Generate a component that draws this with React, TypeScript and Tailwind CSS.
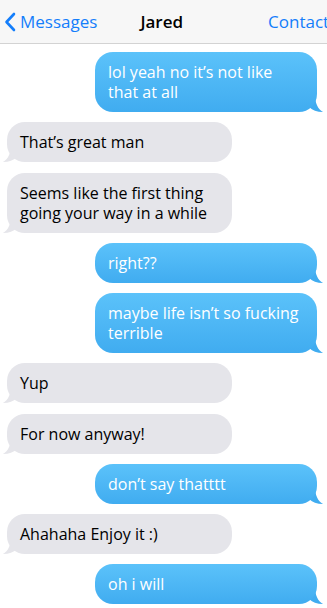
import React from 'react';

type Msg = { from: 'me' | 'them'; text: string };

const messages: Msg[] = [
  { from: 'me', text: 'lol yeah no it’s not like that at all' },
  { from: 'them', text: 'That’s great man' },
  { from: 'them', text: 'Seems like the first thing going your way in a while' },
  { from: 'me', text: 'right??' },
  { from: 'me', text: 'maybe life isn’t so fucking terrible' },
  { from: 'them', text: 'Yup' },
  { from: 'them', text: 'For now anyway!' },
  { from: 'me', text: 'don’t say thatttt' },
  { from: 'them', text: 'Ahahaha Enjoy it :)' },
  { from: 'me', text: 'oh i will' },
];

const Bubble: React.FC<{ msg: Msg }> = ({ msg }) => {
  if (msg.from === 'me') {
    return (
      <div className="flex justify-end pr-[10px]">
        <div className="relative w-[222px]">
          <div className="relative z-10 rounded-[18px] bg-gradient-to-b from-[#5bc2fa] to-[#40acf0] px-[13px] py-[10px] text-[16px] leading-[20px] text-white">
            {msg.text}
          </div>
          <svg className="absolute -right-[7px] bottom-0 z-0" width="18" height="18" viewBox="0 0 20 20">
            <path d="M0 0 L10 0 C10 10 13 17 19 20 C12 20 7 18 4 15 L0 15 Z" fill="#40acf0" />
          </svg>
        </div>
      </div>
    );
  }
  return (
    <div className="flex justify-start pl-[7px]">
      <div className="relative w-[225px]">
        <div className="relative z-10 rounded-[18px] bg-[#e5e5ea] px-[13px] py-[10px] text-[16px] leading-[20px] text-black">
          {msg.text}
        </div>
        <svg className="absolute -left-[5px] bottom-0 z-0" width="18" height="18" viewBox="0 0 20 20">
          <path d="M20 0 L10 0 C10 10 7 17 1 20 C8 20 13 18 16 15 L20 15 Z" fill="#e5e5ea" />
        </svg>
      </div>
    </div>
  );
};

export default function App() {
  return (
    <div
      className="w-[327px] h-[608px] overflow-hidden bg-white"
      style={{ fontFamily: '"Open Sans", "Noto Sans", sans-serif' }}
    >
      <div className="flex h-[44px] items-center overflow-hidden border-b border-[#d3d3d3] bg-[#f7f7f7] pt-[1px] text-[17px] whitespace-nowrap">
        <svg className="ml-[4px] shrink-0" width="12" height="20" viewBox="0 0 12 20">
          <path d="M10 2 L2.5 10 L10 18" fill="none" stroke="#147efb" strokeWidth="2.6" strokeLinecap="round" strokeLinejoin="round" />
        </svg>
        <span className="ml-[4px] shrink-0 text-[#147efb]">Messages</span>
        <span className="ml-[43px] shrink-0 font-semibold text-black">Jared</span>
        <span className="ml-[85px] shrink-0 text-[#147efb]">Contact</span>
      </div>
      <div className="flex flex-col gap-[10.25px] pt-[8px]">
        {messages.map((m, i) => (
          <Bubble key={i} msg={m} />
        ))}
      </div>
    </div>
  );
}
